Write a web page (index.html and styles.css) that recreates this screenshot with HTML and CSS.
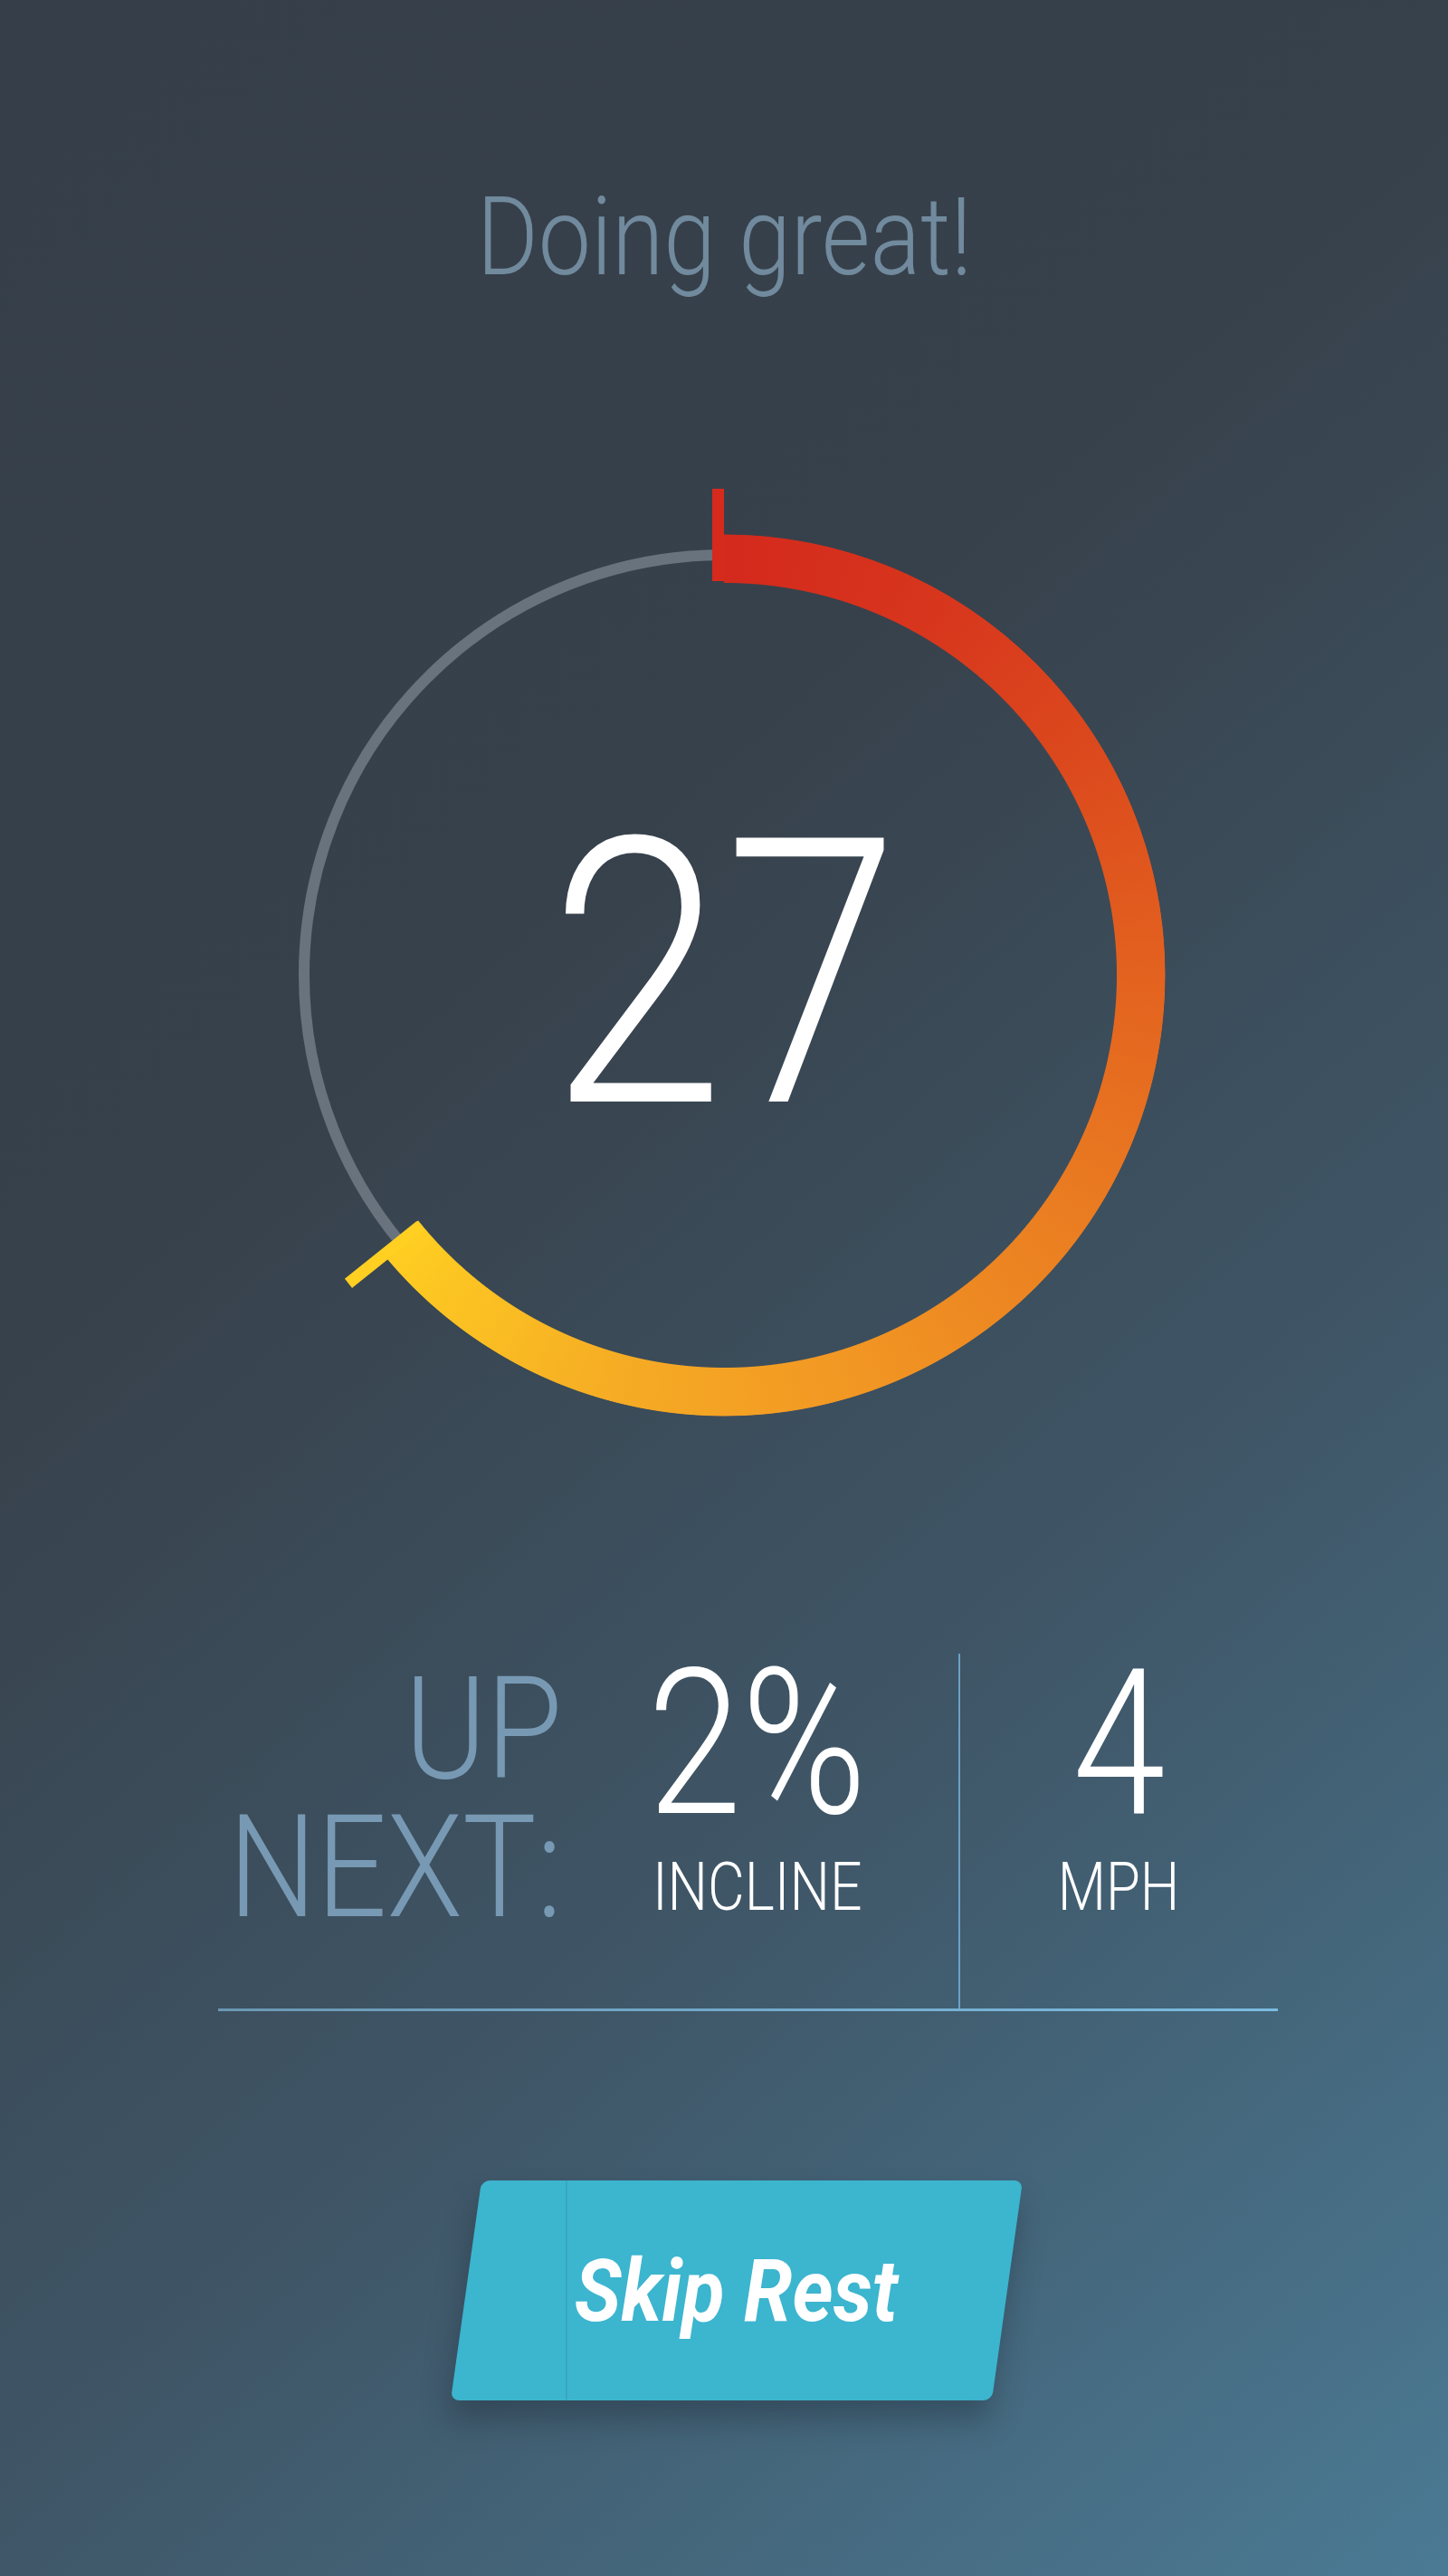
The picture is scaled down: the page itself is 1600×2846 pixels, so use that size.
FILE: index.html
```html
<!DOCTYPE html>
<html lang="en">
<head>
<meta charset="utf-8">
<title>Rest</title>
<link rel="stylesheet" href="styles.css">
</head>
<body>
<main class="screen">
  <h1 class="title"><span class="title-text">Doing great!</span></h1>

  <section class="dial">
    <div class="dial-track"></div>
    <div class="dial-arc"></div>
    <svg class="dial-ticks" viewBox="0 0 1100 1100" width="1100" height="1100" aria-hidden="true">
      <rect x="537" y="13" width="13" height="102" fill="#d62a1d"/>
      <rect x="537" y="13" width="13" height="102" fill="#ffcf22" transform="rotate(231.3 550 550)"/>
    </svg>
    <div class="dial-value"><span class="dial-num">27</span></div>
  </section>

  <section class="next">
    <div class="next-label"><span class="next-label-text">UP<br>NEXT:</span></div>
    <div class="next-col next-col-incline">
      <span class="next-val">2%</span>
      <span class="next-unit">INCLINE</span>
    </div>
    <div class="next-divider"></div>
    <div class="next-col next-col-speed">
      <span class="next-val">4</span>
      <span class="next-unit">MPH</span>
    </div>
  </section>

  <button class="skip" type="button"><span class="skip-text">Skip Rest</span></button>
</main>
</body>
</html>
```

FILE: styles.css
```css
html, body {
  margin: 0;
  padding: 0;
}

body {
  width: 1600px;
  height: 2846px;
  overflow: hidden;
  background: linear-gradient(139deg, #363f49 0%, #37414b 36%, #3f5667 66%, #4b7a94 100%);
  font-family: Roboto, "Open Sans", "Liberation Sans", sans-serif;
}

.screen {
  display: flex;
  flex-direction: column;
  align-items: center;
  width: 1600px;
}

.title {
  margin: 202px 0 0 0;
  font-size: 120px;
  line-height: 120px;
  font-weight: 300;
  color: #718a9d;
  display: flex;
  justify-content: center;
  width: 800px;
}

.title-text {
  display: inline-block;
  transform: scaleX(0.865);
  transform-origin: center;
  white-space: nowrap;
}

.dial {
  position: relative;
  width: 1100px;
  height: 1100px;
  margin-top: 205px;
  display: flex;
  align-items: center;
  justify-content: center;
}

.dial-track {
  position: absolute;
  left: 80px;
  top: 80px;
  width: 916px;
  height: 916px;
  border: 12px solid #69737e;
  border-radius: 50%;
}

.dial-arc {
  position: absolute;
  left: 62.5px;
  top: 62.5px;
  width: 975px;
  height: 975px;
  border-radius: 50%;
  background: conic-gradient(from 0deg,
    #d4291d 0deg,
    #d7361d 30deg,
    #dc4a1d 60deg,
    #e3621f 90deg,
    #ea7d21 125deg,
    #f19523 160deg,
    #f6ac24 195deg,
    #fcc522 222deg,
    #ffcf22 231.3deg,
    transparent 231.3deg);
  -webkit-mask: radial-gradient(circle closest-side, transparent 433px, #000 434px, #000 486.5px, transparent 487.5px);
  mask: radial-gradient(circle closest-side, transparent 433px, #000 434px, #000 486.5px, transparent 487.5px);
}

.dial-ticks {
  position: absolute;
  left: 0;
  top: 0;
}

.dial-value {
  position: relative;
  font-size: 410px;
  line-height: 410px;
  font-weight: 300;
  color: #ffffff;
}

.dial-num {
  display: inline-block;
  transform: scaleX(0.85);
  transform-origin: center;
}

.next {
  display: flex;
  width: 1171px;
  height: 392px;
  margin-top: 200px;
  margin-left: 53px;
  border-bottom: 3px solid transparent;
  border-image: linear-gradient(90deg, #6a97b3, #7bbbe0) 1;
}

.next-label {
  width: 373px;
  flex: none;
  display: flex;
  justify-content: flex-end;
  padding-top: 7px;
}

.next-label-text {
  display: inline-block;
  margin-right: -7px;
  text-align: right;
  font-size: 158px;
  line-height: 153px;
  font-weight: 300;
  color: #7899b3;
  transform: scaleX(0.865);
  transform-origin: right top;
}

.next-col {
  display: flex;
  flex-direction: column;
  align-items: center;
  padding-top: 15px;
  color: #ffffff;
  font-weight: 300;
}

.next-col-incline {
  width: 445px;
  flex: none;
}

.next-col-speed {
  flex: 1;
}

.next-val {
  display: inline-block;
  font-size: 225px;
  line-height: 169px;
  transform: scaleX(0.832);
}

.next-unit {
  display: inline-block;
  margin-top: 36px;
  font-size: 75px;
  line-height: 75px;
  transform: scaleX(0.835);
}

.next-col-speed .next-val,
.next-col-speed .next-unit {
  transform: scaleX(0.82);
}

.next-divider {
  flex: none;
  width: 2px;
  background: #6aa2c6;
}

.skip {
  position: relative;
  width: 598px;
  height: 243px;
  margin-top: 187px;
  margin-left: 28px;
  padding: 0;
  border: 0;
  background: transparent;
  display: flex;
  align-items: center;
  justify-content: center;
  font-family: Roboto, "Liberation Sans", sans-serif;
  cursor: pointer;
}

.skip::before {
  content: "";
  position: absolute;
  inset: 0;
  background: #3cb5cf;
  border-radius: 9px;
  transform: skewX(-8deg);
  box-shadow: 0 22px 32px rgba(25, 35, 45, 0.35);
}

.skip::after {
  content: "";
  position: absolute;
  left: 110px;
  top: 0;
  bottom: 0;
  width: 2px;
  background: #37a8c1;
}

.skip-text {
  position: relative;
  z-index: 1;
  display: inline-block;
  font-size: 96px;
  line-height: 96px;
  font-weight: 700;
  font-style: italic;
  color: #ffffff;
  transform: scaleX(0.9);
}
```
